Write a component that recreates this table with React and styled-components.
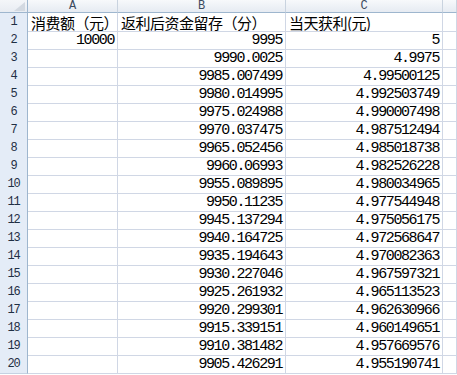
import React from 'react';
import styled, { createGlobalStyle } from 'styled-components';

const COLUMNS = '28px 90px 168px 157px 1fr';

const ROWS = [
  ['消费额（元）', '返利后资金留存（分）', '当天获利(元)'],
  ['10000', '9995', '5'],
  ['', '9990.0025', '4.9975'],
  ['', '9985.007499', '4.99500125'],
  ['', '9980.014995', '4.992503749'],
  ['', '9975.024988', '4.990007498'],
  ['', '9970.037475', '4.987512494'],
  ['', '9965.052456', '4.985018738'],
  ['', '9960.06993', '4.982526228'],
  ['', '9955.089895', '4.980034965'],
  ['', '9950.11235', '4.977544948'],
  ['', '9945.137294', '4.975056175'],
  ['', '9940.164725', '4.972568647'],
  ['', '9935.194643', '4.970082363'],
  ['', '9930.227046', '4.967597321'],
  ['', '9925.261932', '4.965113523'],
  ['', '9920.299301', '4.962630966'],
  ['', '9915.339151', '4.960149651'],
  ['', '9910.381482', '4.957669576'],
  ['', '9905.426291', '4.955190741'],
];

const GlobalStyle = createGlobalStyle`
  html, body {
    margin: 0;
    padding: 0;
    background: #fff;
    overflow: hidden;
  }
`;

const Sheet = styled.div`
  width: 457px;
  height: 375px;
  overflow: hidden;
  background: #fff;
`;

const HeaderRow = styled.div`
  display: grid;
  grid-template-columns: ${COLUMNS};
  height: 13px;
`;

const Corner = styled.div`
  box-sizing: border-box;
  position: relative;
  background: linear-gradient(#f4f6f9, #e8ecf2);
  border-right: 1px solid #9eb6ce;
  border-bottom: 1px solid #9eb6ce;

  svg {
    position: absolute;
    right: 2px;
    bottom: 1px;
  }
`;

const ColHead = styled.div`
  box-sizing: border-box;
  background: linear-gradient(#f7f9fb, #e6ebf2);
  border-right: 1px solid #c9d3df;
  border-bottom: 1px solid #9eb6ce;
  font-family: "Liberation Mono", monospace;
  font-size: 12px;
  line-height: 12px;
  color: #3c4a5e;
  text-align: center;
`;

const Row = styled.div`
  display: grid;
  grid-template-columns: ${COLUMNS};
  height: 18px;
`;

const RowHead = styled.div`
  box-sizing: border-box;
  background: #e4ecf7;
  border-right: 1px solid #9eb6ce;
  border-bottom: 1px solid #c5d2e2;
  font-family: "Liberation Mono", monospace;
  font-size: 12px;
  letter-spacing: -1.2px;
  line-height: 17px;
  padding-top: 1px;
  color: #1f2f44;
  text-align: center;
`;

const Cell = styled.div`
  box-sizing: border-box;
  border-right: 1px solid #d0d7e5;
  border-bottom: 1px solid #d0d7e5;
  padding: ${p => (p.$num ? '2px 3px 0' : '2px 0 0 3px')};
  overflow: hidden;
  white-space: nowrap;
  color: #000;
  text-align: ${p => (p.$num ? 'right' : 'left')};
  font-family: ${p => (p.$num ? '"Liberation Mono", monospace' : '"Noto Sans CJK SC", sans-serif')};
  font-size: 15px;
  letter-spacing: ${p => (p.$num ? '-1.4px' : '-0.5px')};
  line-height: 16px;
`;

const isNum = v => /^[\d.]+$/.test(v);

const App = () => (
  <Sheet>
    <GlobalStyle />
    <HeaderRow>
      <Corner>
        <svg width="11" height="9" viewBox="0 0 11 9">
          <polygon points="11,0 11,9 0,9" fill="#d3d9e1" />
        </svg>
      </Corner>
      <ColHead>A</ColHead>
      <ColHead>B</ColHead>
      <ColHead>C</ColHead>
      <ColHead />
    </HeaderRow>
    {ROWS.map((r, i) => (
      <Row key={i}>
        <RowHead>{i + 1}</RowHead>
        {r.map((v, j) => (
          <Cell key={j} $num={isNum(v)}>{v}</Cell>
        ))}
        <Cell />
      </Row>
    ))}
  </Sheet>
);

export default App;
